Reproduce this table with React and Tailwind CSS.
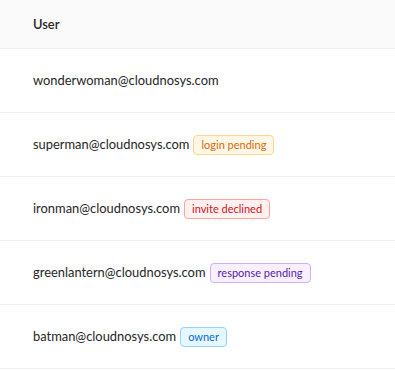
export default function App() {
  const rows = [
    { email: "wonderwoman@cloudnosys.com" },
    { email: "superman@cloudnosys.com", tag: "login pending", cls: "bg-[#fff7e6] border-[#ffd591] text-[#d46b08]" },
    { email: "ironman@cloudnosys.com", tag: "invite declined", cls: "bg-[#fff1f0] border-[#ffa39e] text-[#cf1322]" },
    { email: "greenlantern@cloudnosys.com", tag: "response pending", cls: "bg-[#f9f0ff] border-[#d3adf7] text-[#531dab]" },
    { email: "batman@cloudnosys.com", tag: "owner", cls: "bg-[#e6f7ff] border-[#91d5ff] text-[#096dd9]" },
  ];
  return (
    <div className="w-[395px] h-[370px] bg-white text-[12.9px] text-[#262626] font-['Lato',sans-serif] overflow-hidden">
      <div className="h-[49px] bg-[#fafafa] border-b border-[#f0f0f0] flex items-center pl-[33px] pt-[1px] font-semibold">
        User
      </div>
      {rows.map((r) => (
        <div key={r.email} className="h-[64px] border-b border-[#f0f0f0] flex items-center pl-[33px] pt-[1px]">
          <span>{r.email}</span>
          {r.tag && (
            <span className={`ml-[4px] h-[20px] leading-[18px] px-[7px] text-[11px] border rounded-[4px] ${r.cls}`}>
              {r.tag}
            </span>
          )}
        </div>
      ))}
    </div>
  );
}
